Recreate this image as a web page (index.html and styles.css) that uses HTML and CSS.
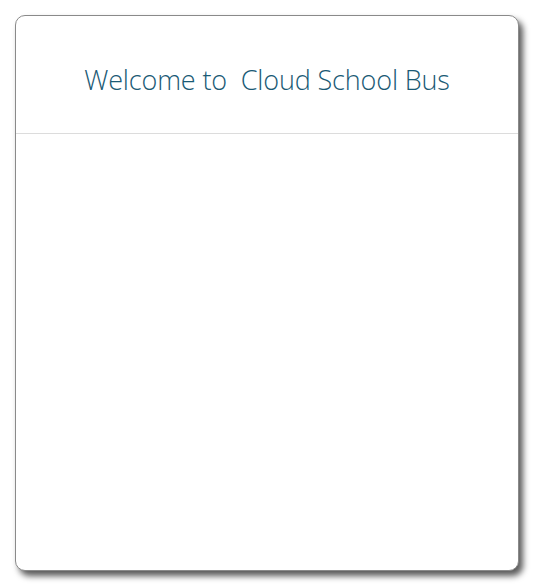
FILE: index.html
```html
<!DOCTYPE html>
<html>
<head>
<meta charset="utf-8">
<link rel="stylesheet" href="styles.css">
</head>
<body>
<div class="card">
  <div class="card-header">
    <h1 class="title">Welcome to&nbsp; Cloud School Bus</h1>
  </div>
  <div class="card-body"></div>
</div>
</body>
</html>
```
FILE: styles.css
```css
html, body {
  margin: 0;
  padding: 0;
  background: #ffffff;
}
body {
  padding: 15px 0 17px 15px;
  min-height: 588px;
  box-sizing: border-box;
}
.card {
  box-sizing: border-box;
  width: 504px;
  height: 556px;
  border: 1px solid #8a8a8a;
  border-radius: 10px;
  background: #ffffff;
  box-shadow: 4px 5px 6px #5a5a5a;
  display: flex;
  flex-direction: column;
}
.card-header {
  height: 118px;
  border-bottom: 1px solid #dcdcdc;
  display: flex;
  align-items: center;
  justify-content: center;
  box-sizing: border-box;
}
.title {
  margin: 0;
  padding-top: 10px;
  font-family: "Open Sans", sans-serif;
  font-weight: 300;
  font-size: 27px;
  color: #1a5a75;
  letter-spacing: -0.15px;
}
.card-body {
  flex: 1;
}
```
